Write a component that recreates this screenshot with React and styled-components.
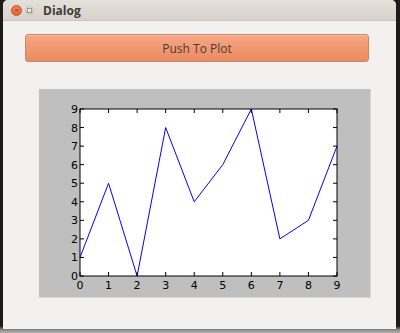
import React from "react";
import styled, { createGlobalStyle } from "styled-components";

const GlobalStyle = createGlobalStyle`
  html, body {
    margin: 0;
    padding: 0;
    background: #1b1b1b;
  }
  #root {
    width: 400px;
    height: 333px;
    overflow: hidden;
  }
`;

const Screen = styled.div`
  width: 400px;
  height: 333px;
  display: flex;
  flex-direction: column;
  background: linear-gradient(#1b1b1b 0, #1b1b1b 326px, #8e8e8e 330px, #b0b0b0 333px);
`;

const Window = styled.div`
  margin-left: 3px;
  width: 393px;
  height: 329px;
  display: flex;
  flex-direction: column;
  background: #f2f1ef;
  border-radius: 5px 5px 0 0;
  overflow: hidden;
`;

const TitleBar = styled.div`
  height: 20px;
  display: flex;
  align-items: center;
  padding-left: 8px;
  background: linear-gradient(#e4e0da, #d8d3cc);
  border-bottom: 1px solid #c9c4bc;
  font-family: "Open Sans", "DejaVu Sans", sans-serif;
`;

const WinButton = styled.span`
  box-sizing: border-box;
  width: ${(p) => (p.close ? 11 : 9)}px;
  height: ${(p) => (p.close ? 11 : 9)}px;
  margin-right: ${(p) => (p.close ? 3 : 0)}px;
  border-radius: 50%;
  display: flex;
  align-items: center;
  justify-content: center;
  background: ${(p) => (p.close ? "radial-gradient(circle at 50% 35%, #f58b5c, #e4572a)" : "radial-gradient(circle at 50% 35%, #f4f2ef, #d6d2cc)")};
  border: 1px solid ${(p) => (p.close ? "#c9521f" : "#bfbab2")};
  color: #6a3420;
  font-size: 8px;
  line-height: 1;
`;

const MaxBox = styled.span`
  width: 3px;
  height: 3px;
  border: 1px solid #9c978f;
`;

const Title = styled.span`
  margin-left: 9px;
  font-size: 12px;
  font-weight: 700;
  color: #3c3b37;
`;

const Body = styled.div`
  flex: 1;
  display: flex;
  flex-direction: column;
  padding: 13px 0 0 22px;
`;

const PlotButton = styled.button`
  width: 344px;
  height: 28px;
  border: 1px solid #c98866;
  border-radius: 3px;
  background: linear-gradient(#f6a786, #ec8a61);
  box-shadow: inset 0 1px 0 rgba(255, 255, 255, 0.25);
  font-family: "Open Sans", "DejaVu Sans", sans-serif;
  font-size: 12px;
  color: #4c3b33;
  padding: 0;
`;

const Canvas = styled.div`
  margin: 27px 0 0 14px;
  width: 331px;
  height: 208px;
  background: #bfbfbf;
  border-right: 1px solid #d6d6d6;
  border-bottom: 1px solid #d6d6d6;
`;

const data = [1, 5, 0, 8, 4, 6, 9, 2, 3, 7];
const L = 41;
const T = 20;
const R = 298;
const B = 187;
const sx = (v) => L + ((R - L) * v) / 9;
const sy = (v) => B - ((B - T) * v) / 9;
const ticks = [0, 1, 2, 3, 4, 5, 6, 7, 8, 9];

const Plot = () => (
  <svg width="331" height="208" style={{ display: "block" }}>
    <rect x={L} y={T} width={R - L} height={B - T} fill="#ffffff" />
    <polyline
      points={data.map((v, i) => `${sx(i)},${sy(v)}`).join(" ")}
      fill="none"
      stroke="#0000ff"
      strokeWidth="1"
    />
    {ticks.map((t) => (
      <g key={t} stroke="#000" strokeWidth="1">
        <line x1={sx(t)} y1={B} x2={sx(t)} y2={B - 4} />
        <line x1={sx(t)} y1={T} x2={sx(t)} y2={T + 4} />
        <line x1={L} y1={sy(t)} x2={L + 4} y2={sy(t)} />
        <line x1={R} y1={sy(t)} x2={R - 4} y2={sy(t)} />
      </g>
    ))}
    <rect x={L} y={T} width={R - L} height={B - T} fill="none" stroke="#000" strokeWidth="1" />
    <g fontFamily="DejaVu Sans, sans-serif" fontSize="11" fill="#000">
      {ticks.map((t) => (
        <text key={"x" + t} x={sx(t)} y={B + 13} textAnchor="middle">
          {t}
        </text>
      ))}
      {ticks.map((t) => (
        <text key={"y" + t} x={L - 2} y={sy(t) + 4} textAnchor="end">
          {t}
        </text>
      ))}
    </g>
  </svg>
);

export default function App() {
  return (
    <Screen>
      <GlobalStyle />
      <Window>
        <TitleBar>
          <WinButton close>×</WinButton>
          <WinButton>
            <MaxBox />
          </WinButton>
          <Title>Dialog</Title>
        </TitleBar>
        <Body>
          <PlotButton>Push To Plot</PlotButton>
          <Canvas>
            <Plot />
          </Canvas>
        </Body>
      </Window>
    </Screen>
  );
}
